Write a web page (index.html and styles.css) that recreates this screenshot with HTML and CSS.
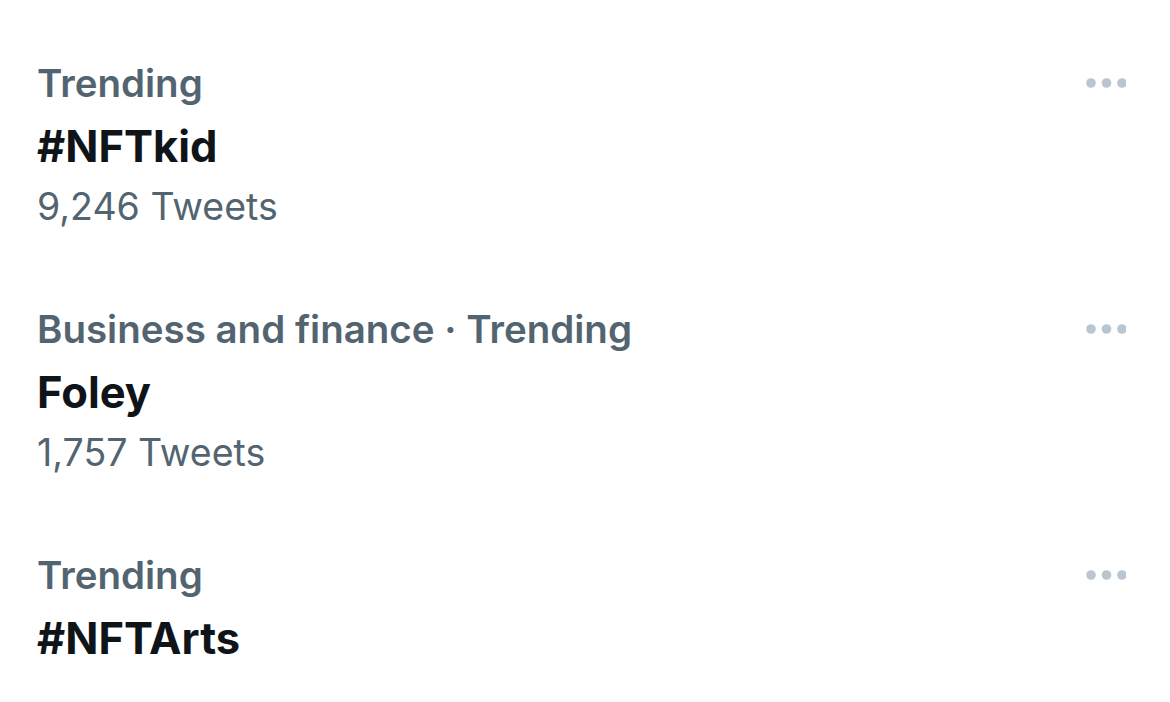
FILE: index.html
```html
<!DOCTYPE html>
<html>
<head>
<meta charset="utf-8">
<link rel="stylesheet" href="styles.css">
</head>
<body>
<div class="list">
  <div class="item">
    <div class="head">
      <div class="cat">Trending</div>
      <svg class="more" width="40" height="12" viewBox="0 0 40 12"><circle cx="5" cy="6" r="4.8"/><circle cx="20.5" cy="6" r="4.8"/><circle cx="36" cy="6" r="4.8"/></svg>
    </div>
    <div class="title">#NFTkid</div>
    <div class="count">9,246 Tweets</div>
  </div>
  <div class="item">
    <div class="head">
      <div class="cat">Business and finance · Trending</div>
      <svg class="more" width="40" height="12" viewBox="0 0 40 12"><circle cx="5" cy="6" r="4.8"/><circle cx="20.5" cy="6" r="4.8"/><circle cx="36" cy="6" r="4.8"/></svg>
    </div>
    <div class="title">Foley</div>
    <div class="count">1,757 Tweets</div>
  </div>
  <div class="item">
    <div class="head">
      <div class="cat">Trending</div>
      <svg class="more" width="40" height="12" viewBox="0 0 40 12"><circle cx="5" cy="6" r="4.8"/><circle cx="20.5" cy="6" r="4.8"/><circle cx="36" cy="6" r="4.8"/></svg>
    </div>
    <div class="title">#NFTArts</div>
  </div>
</div>
</body>
</html>
```
FILE: styles.css
```css
html, body {
  margin: 0;
  background: #ffffff;
}
body {
  font-family: Inter, "Noto Sans", sans-serif;
  -webkit-font-smoothing: antialiased;
}
.list {
  display: flex;
  flex-direction: column;
  gap: 60px;
  padding: 51px 44px 0 37px;
}
.item {
  display: flex;
  flex-direction: column;
}
.head {
  display: flex;
  align-items: center;
  justify-content: space-between;
  height: 64px;
}
.cat {
  font-size: 38.5px;
  font-weight: 600;
  color: #536471;
  line-height: 64px;
}
.more {
  fill: #b9c6d2;
  margin-top: 0;
}
.title {
  font-size: 43.5px;
  font-weight: 700;
  color: #0f1419;
  line-height: 62px;
}
.count {
  font-size: 37.5px;
  font-weight: 400;
  color: #536471;
  line-height: 60px;
}
```
